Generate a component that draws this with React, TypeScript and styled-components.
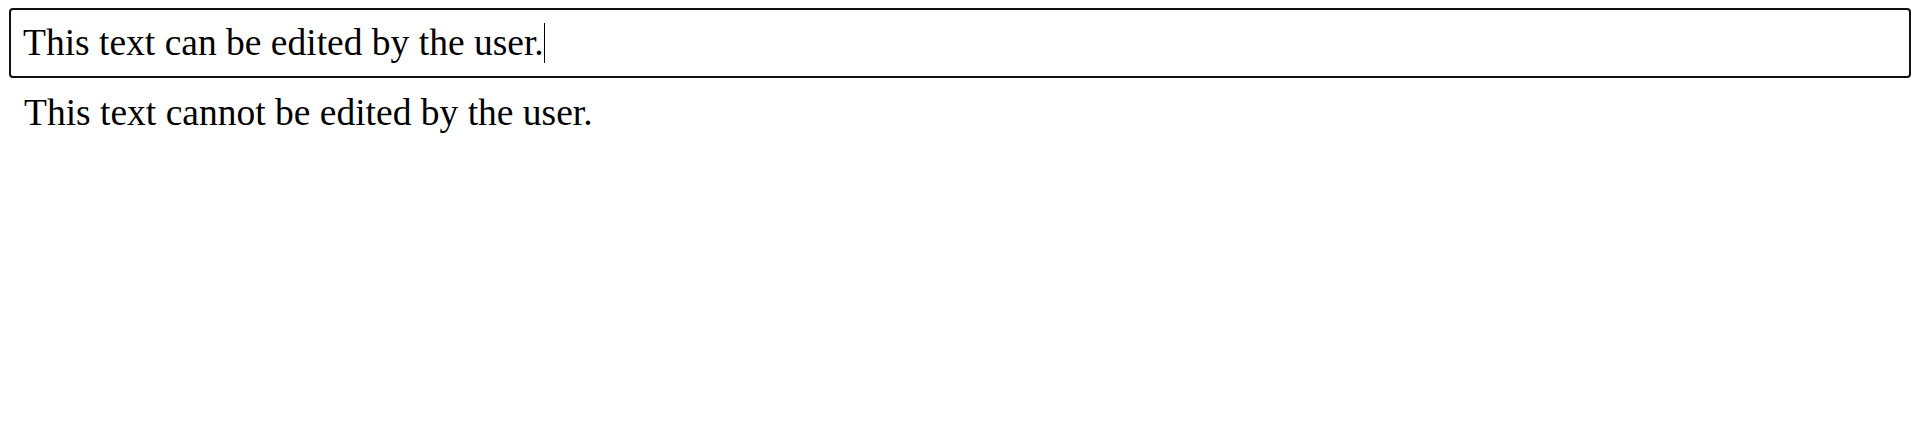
import React from "react";
import styled, { createGlobalStyle } from "styled-components";

const Global = createGlobalStyle`
  html, body {
    margin: 0;
    padding: 0;
    background: #ffffff;
  }
  body {
    font-family: "Liberation Serif", "Times New Roman", serif;
    color: #000000;
  }
`;

const Page = styled.main`
  display: flex;
  flex-direction: column;
  padding: 8px 9px;
`;

const Editable = styled.div`
  border: 2px solid #101010;
  border-radius: 4px;
  padding: 12px;
  font-size: 37.5px;
  line-height: 42px;
  outline: none;
  caret-color: transparent;
  white-space: nowrap;
`;

const Caret = styled.span`
  display: inline-block;
  width: 1px;
  height: 40px;
  margin-left: 0;
  background: #000000;
  vertical-align: -8px;
`;

const Static = styled.p`
  margin: 14px 0 0;
  padding-left: 15px;
  font-size: 37.5px;
  line-height: 42px;
`;

export default function App() {
  return (
    <>
      <Global />
      <Page>
        <Editable contentEditable suppressContentEditableWarning>
          This text can be edited by the user.<Caret />
        </Editable>
        <Static>This text cannot be edited by the user.</Static>
      </Page>
    </>
  );
}
